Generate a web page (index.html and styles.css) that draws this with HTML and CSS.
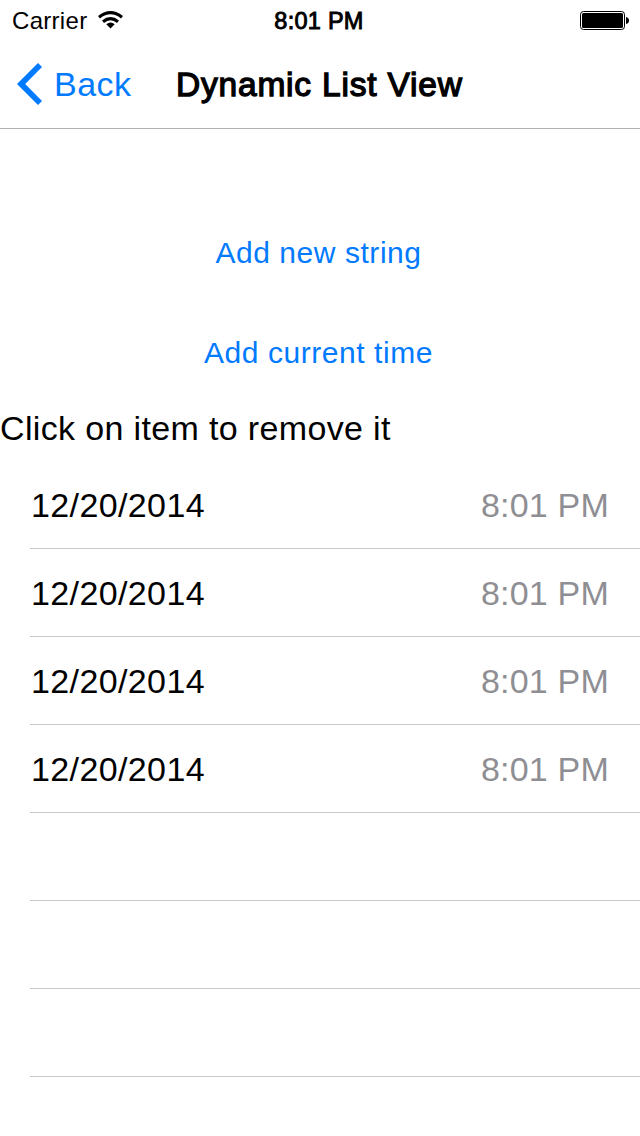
FILE: index.html
```html
<!DOCTYPE html>
<html lang="en">
<head>
<meta charset="utf-8">
<title>Dynamic List View</title>
<link rel="stylesheet" href="styles.css">
</head>
<body>
<header class="header">
  <div class="status">
    <div class="carrier"><span class="carrier-name">Carrier</span>
      <svg class="wifi" width="25" height="18" viewBox="0 0 25 18"><g fill="none" stroke="#000" stroke-width="3.1"><path d="M1 6.2Q12.5-3 24 6.2"/><path d="M5 10.7Q12.5 4.6 20 10.7"/></g><path d="M8.3 13.2Q12.5 9.6 16.7 13.2L12.5 17.6Z"/></svg>
    </div>
    <span class="clock">8:01 PM</span>
    <svg class="battery" width="49" height="19" viewBox="0 0 49 19"><rect x=".5" y=".5" width="44" height="18" rx="3" fill="none" stroke="#000"/><rect x="2" y="2" width="41" height="15" rx="1.5"/><path d="M46 6Q49 6.5 49 9.5T46 13Z"/></svg>
  </div>
  <nav class="nav">
    <a class="back"><svg class="chevron" width="25" height="42" viewBox="0 0 25 42"><path d="M0 21L21 0L25 4L8.2 21L25 38L21 42Z" fill="#007aff"/></svg><span class="back-label">Back</span></a>
    <h1 class="title">Dynamic List View</h1>
  </nav>
</header>
<main>
  <div class="actions">
    <button class="action">Add new string</button>
    <button class="action">Add current time</button>
  </div>
  <p class="hint">Click on item to remove it</p>
  <ul class="list">
    <li class="row"><span class="date">12/20/2014</span><span class="time">8:01 PM</span></li>
    <li class="row"><span class="date">12/20/2014</span><span class="time">8:01 PM</span></li>
    <li class="row"><span class="date">12/20/2014</span><span class="time">8:01 PM</span></li>
    <li class="row"><span class="date">12/20/2014</span><span class="time">8:01 PM</span></li>
    <li class="row"></li>
    <li class="row"></li>
    <li class="row"></li>
  </ul>
</main>
</body>
</html>
```
FILE: styles.css
```css
* { box-sizing: border-box; }
body { margin: 0; height: 1136px; overflow: hidden; background: #fff; color: #000; font-family: "Liberation Sans", Arial, sans-serif; font-size: 34px; }
.header { height: 129px; border-bottom: 1px solid #b2b2b2; }
.status { height: 41px; display: grid; grid-template-columns: 1fr auto 1fr; align-items: center; padding: 0 11px 0 12px; font-size: 24px; }
.carrier { display: flex; align-items: center; gap: 11px; }
.carrier-name { letter-spacing: .3px; padding-top: 1px; }
.wifi { margin-bottom: 1px; }
.clock { font-size: 23.5px; letter-spacing: .25px; -webkit-text-stroke: .9px #000; padding: 1px 3px 0 0; }
.battery { justify-self: end; }
.nav { height: 87px; display: flex; align-items: center; }
.back { display: flex; align-items: center; width: 176px; padding-left: 17px; gap: 12px; color: #007aff; }
.chevron { margin-bottom: 2px; }
.back-label { letter-spacing: .5px; }
.title { margin: 0; font-size: 33.5px; font-weight: normal; letter-spacing: .8px; -webkit-text-stroke: 1.3px #000; white-space: nowrap; }
.actions { height: 275px; padding: 74px 3px 0 0; display: flex; flex-direction: column; }
.action { height: 100px; border: 0; padding: 0; background: none; color: #007aff; font: 30px "Liberation Sans", Arial, sans-serif; letter-spacing: .55px; }
.hint { margin: 0; height: 57px; line-height: 48px; letter-spacing: .35px; }
.list { list-style: none; margin: 0; padding: 0 0 0 30px; }
.row { height: 88px; border-bottom: 1px solid #c8c7cc; display: flex; align-items: center; justify-content: space-between; padding: 2px 31px 0 1px; }
.date { letter-spacing: .38px; }
.time { color: #8e8e93; letter-spacing: .2px; }
```
